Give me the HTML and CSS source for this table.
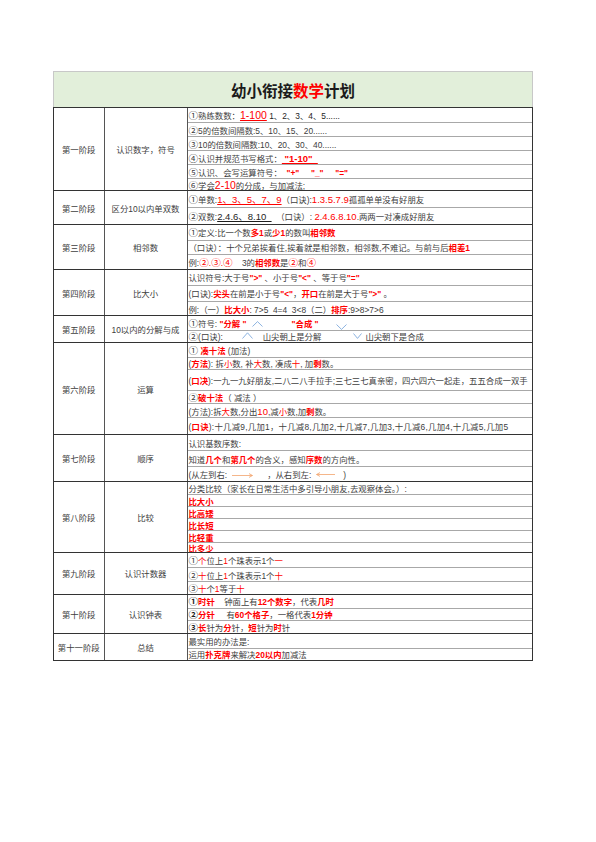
FILE: index.html
```html
<!DOCTYPE html>
<html lang="zh-CN">
<head>
<meta charset="utf-8">
<title>幼小衔接数学计划</title>
<link rel="stylesheet" href="styles.css">
</head>
<body>
<div class="sheet">
  <div class="title">幼小衔接<span class="red">数学</span>计划</div>
  <div class="tbody">

    <div class="stage">
      <div class="c1">第一阶段</div>
      <div class="c2">认识数字，符号</div>
      <div class="c3">
        <div class="r h14"><span><span class="ci">①</span>熟练数数：<span class="red u nb">1-100</span><span class="dk"> 1、2、3、4、5......</span></span></div>
        <div class="r h14"><span><span class="ci">②</span>5的倍数间隔数:5、10、15、20......</span></div>
        <div class="r h14"><span><span class="ci">③</span>10的倍数间隔数:10、20、30、40......</span></div>
        <div class="r h14"><span><span class="ci">④</span>认识并规范书写格式：<span class="red u n b"> "1-10"  </span></span></div>
        <div class="r h14"><span><span class="ci">⑤</span>认识、会写运算符号：<span class="red b">  "+"     "_"     "="</span></span></div>
        <div class="r h12"><span><span class="ci">⑥</span>学会<span class="red nb">2-10</span>的分成，与加减法;</span></div>
      </div>
    </div>

    <div class="stage">
      <div class="c1">第二阶段</div>
      <div class="c2">区分10以内单双数</div>
      <div class="c3">
        <div class="r h15h"><span><span class="ci">①</span>单数:<span class="red u n">1、3、5、7、9</span>（口诀):<span class="red n">1.3.5.7.9</span>孤孤单单没有好朋友</span></div>
        <div class="r h17h"><span><span class="ci">②</span>双数:<span class="dk u n">2.4.6、8.10  </span>  （口诀）: <span class="red n">2.4.6.8.10</span>.两两一对凑成好朋友</span></div>
      </div>
    </div>

    <div class="stage">
      <div class="c1">第三阶段</div>
      <div class="c2">相邻数</div>
      <div class="c3">
        <div class="r h14h"><span><span class="ci">①</span>定义:比一个数<span class="rb">多1</span>或<span class="rb">少1</span>的数叫<span class="rb">相邻数</span></span></div>
        <div class="r h14h"><span>（口诀）：十个兄弟挨着住,挨着就是相邻数，相邻数,不难记。与前与后<span class="rb">相差1</span></span></div>
        <div class="r h15"><span>例:<span class="red"><span class="ci">②</span>.<span class="ci">③</span>.<span class="ci">④</span></span>    3的<span class="rb">相邻数</span>是<span class="red ci">②</span>和<span class="red ci">④</span></span></div>
      </div>
    </div>

    <div class="stage">
      <div class="c1">第四阶段</div>
      <div class="c2">比大小</div>
      <div class="c3">
        <div class="r h14h"><span>认识符号:大于号<span class="rb">"&gt;"</span> 、小于号<span class="rb">"&lt;"</span> 、等于号<span class="rb">"="</span></span></div>
        <div class="r h16h"><span>(口诀):<span class="rb">尖头</span>在前是小于号<span class="rb">"&lt;"</span>，<span class="rb">开口</span>在前是大于号<span class="rb">"&gt;"</span> 。</span></div>
        <div class="r h14"><span>例:（一）<span class="rb">比大小</span>: 7&gt;5  4=4  3&lt;8（二）<span class="rb">排序</span>:9&gt;8&gt;7&gt;6</span></div>
      </div>
    </div>

    <div class="stage">
      <div class="c1">第五阶段</div>
      <div class="c2">10以内的分解与成</div>
      <div class="c3">
        <div class="r h13h rel"><span><span class="ci">①</span>符号: <span class="rb">"分解 "</span><i class="sp sp45"></i><span class="rb">"合成 "</span></span>
          <svg class="ic up1" width="11" height="6" viewBox="0 0 11 6"><path d="M0.5 5.5L5.5 0.6L10.5 5.5" fill="none" stroke="#6f9fd8" stroke-width="0.8"/></svg>
          <svg class="ic dn1" width="11" height="6" viewBox="0 0 11 6"><path d="M0.5 0.5L5.5 5.4L10.5 0.5" fill="none" stroke="#6f9fd8" stroke-width="0.8"/></svg>
        </div>
        <div class="r h12h rel"><span><span class="ci">②</span>(口诀):<i class="sp sp40"></i>山尖朝上是分解<i class="sp sp44"></i>山尖朝下是合成</span>
          <svg class="ic up2" width="11" height="7" viewBox="0 0 11 7"><path d="M0.5 6.5L5.5 0.8L10.5 6.5" fill="none" stroke="#6f9fd8" stroke-width="0.8"/></svg>
          <svg class="ic dn2" width="9" height="6" viewBox="0 0 9 6"><path d="M0.5 0.5L4.5 5.4L8.5 0.5" fill="none" stroke="#6f9fd8" stroke-width="0.8"/></svg>
        </div>
      </div>
    </div>

    <div class="stage">
      <div class="c1">第六阶段</div>
      <div class="c2">运算</div>
      <div class="c3">
        <div class="r h13h"><span><span class="ci">①</span> <span class="rb">凑十法</span> (加法)</span></div>
        <div class="r h12"><span>(<span class="rb">方法</span>): 拆<span class="red">小</span>数, 补<span class="red">大</span>数, 凑成<span class="red">十</span>, 加<span class="rb">剩</span>数。</span></div>
        <div class="r h21h"><span>(<span class="rb">口决</span>):一九一九好朋友,二八二八手拉手;三七三七真亲密，四六四六一起走，五五合成一双手</span></div>
        <div class="r h13"><span><span class="ci">②</span><span class="rb">破十法</span>（ 减法 ）</span></div>
        <div class="r h14"><span>(方法):拆<span class="red">大</span>数,分出<span class="red n">10</span>,减<span class="red">小</span>数,加<span class="rb">剩</span>数。</span></div>
        <div class="r h17"><span class="wide">(<span class="rb">口诀</span>):十几减9,几加1，十几减8,几加2,十几减7,几加3,十几减6,几加4,十几减5,几加5</span></div>
      </div>
    </div>

    <div class="stage">
      <div class="c1">第七阶段</div>
      <div class="c2">顺序</div>
      <div class="c3">
        <div class="r h15"><span>认识基数序数:</span></div>
        <div class="r h16"><span>知道<span class="rb">几个</span>和<span class="rb">第几个</span>的含义，感知<span class="rb">序数</span>的方向性。</span></div>
        <div class="r h14h rel"><span>(从左到右:<i class="sp sp40"></i>，从右到左:<i class="sp sp32"></i>)</span>
          <svg class="ic ar1" width="21" height="5" viewBox="0 0 21 5"><path d="M0 2.5H20.3M17 0.6L20.5 2.5L17 4.4" fill="none" stroke="#f2a36c" stroke-width="0.8"/></svg>
          <svg class="ic ar2" width="19" height="5" viewBox="0 0 19 5"><path d="M19 2.5H0.7M4 0.6L0.5 2.5L4 4.4" fill="none" stroke="#f2a36c" stroke-width="0.8"/></svg>
        </div>
      </div>
    </div>

    <div class="stage">
      <div class="c1">第八阶段</div>
      <div class="c2">比较</div>
      <div class="c3">
        <div class="r h12h"><span>分类比较（家长在日常生活中多引导小朋友,去观察体会。）:</span></div>
        <div class="r h12"><span class="rb">比大小</span></div>
        <div class="r h12"><span class="rb">比高矮</span></div>
        <div class="r h12"><span class="rb">比长短</span></div>
        <div class="r h12"><span class="rb">比轻重</span></div>
        <div class="r h10"><span class="rb">比多少</span></div>
      </div>
    </div>

    <div class="stage">
      <div class="c1">第九阶段</div>
      <div class="c2">认识计数器</div>
      <div class="c3">
        <div class="r h14"><span><span class="ci">①</span><span class="red">个</span>位上<span class="red">1</span>个珠表示1个<span class="red">一</span></span></div>
        <div class="r h14"><span><span class="ci">②</span><span class="red">十</span>位上<span class="red">1</span>个珠表示1个<span class="red">十</span></span></div>
        <div class="r h12h"><span><span class="ci">③</span><span class="red">十</span>个<span class="red">1</span>等于<span class="red">十</span></span></div>
      </div>
    </div>

    <div class="stage">
      <div class="c1">第十阶段</div>
      <div class="c2">认识钟表</div>
      <div class="c3">
        <div class="r h13"><span><span class="ci b dk">①</span><span class="rb">时针</span>    钟面上有<span class="rb">12个数字</span>，代表<span class="rb">几时</span></span></div>
        <div class="r h12h"><span><span class="ci b dk">②</span><span class="rb">分针</span>     有<span class="rb">60个格子</span>，一格代表<span class="rb">1分钟</span></span></div>
        <div class="r h12h"><span><span class="ci b dk">③</span><span class="rb">长</span>针为<span class="rb">分</span>针，<span class="rb">短</span>针为<span class="rb">时</span>针</span></div>
      </div>
    </div>

    <div class="stage">
      <div class="c1">第十一阶段</div>
      <div class="c2">总结</div>
      <div class="c3">
        <div class="r h14"><span>最实用的办法是:</span></div>
        <div class="r h12"><span>运用<span class="rb">扑克牌</span>来解决<span class="rb">20以内</span>加减法</span></div>
      </div>
    </div>

  </div>
</div>
</body>
</html>
```

FILE: styles.css
```css
body {
  margin: 0;
  background: #ffffff;
  font-family: "Liberation Sans", "Noto Sans CJK SC", sans-serif;
  font-size: 8.4px;
  color: #404040;
}

.sheet {
  width: 480px;
  margin: 71px 0 0 53px;
}

.title {
  box-sizing: border-box;
  height: 36px;
  border: 1px solid #c8c8c8;
  border-bottom: 0;
  background: #e2efda;
  display: flex;
  align-items: center;
  justify-content: center;
  font-family: "Noto Sans CJK SC", sans-serif;
  font-size: 15.5px;
  font-weight: bold;
  color: #1b1b1b;
}

.tbody {
  border: 1.5px solid #333333;
}

.stage {
  display: grid;
  grid-template-columns: 50.5px 83px 1fr;
}

.stage + .stage {
  border-top: 1.5px solid #333333;
}

.c1,
.c2 {
  border-right: 1px solid #555555;
  display: flex;
  align-items: center;
  justify-content: center;
  white-space: nowrap;
}

.c3 {
  min-width: 0;
}

.r {
  box-sizing: border-box;
  display: flex;
  align-items: center;
  padding-left: 1px;
  white-space: pre;
  overflow: hidden;
}

.r + .r {
  border-top: 1px solid #a8a8a8;
}

.rel {
  position: relative;
}

.h10 { height: 10px; }
.h12 { height: 12px; }
.h12h { height: 12.5px; }
.h13 { height: 13px; }
.h13h { height: 13.5px; }
.h14 { height: 14px; }
.h14h { height: 14.5px; }
.h15 { height: 15px; }
.h15h { height: 15.5px; }
.h16 { height: 16px; }
.h16h { height: 16.5px; }
.h17 { height: 17px; }
.h17h { height: 17.5px; }
.h21h { height: 21.5px; }

.red { color: #ff0000; }
.rb { color: #ff0000; font-weight: bold; }
.b { font-weight: bold; }
.dk { color: #1e1e1e; }
.u { text-decoration: underline; }
.n { font-size: 9.5px; }
.nb { font-size: 10.5px; }

.ci {
  font-family: "Noto Sans CJK SC", sans-serif;
  font-size: 9.6px;
  line-height: 1;
}

.wide {
  letter-spacing: 0.25px;
}

.sp {
  display: inline-block;
}
.sp32 { width: 32px; }
.sp40 { width: 40px; }
.sp44 { width: 44px; }
.sp45 { width: 45px; }

.ic {
  position: absolute;
  display: block;
}
.up1 { left: 64.5px; top: 5px; }
.dn1 { left: 148px; top: 7.5px; }
.up2 { left: 54.5px; top: 1.5px; }
.dn2 { left: 165px; top: 2.5px; }
.ar1 { left: 44.5px; top: 5.5px; }
.ar2 { left: 128px; top: 5px; }
```
